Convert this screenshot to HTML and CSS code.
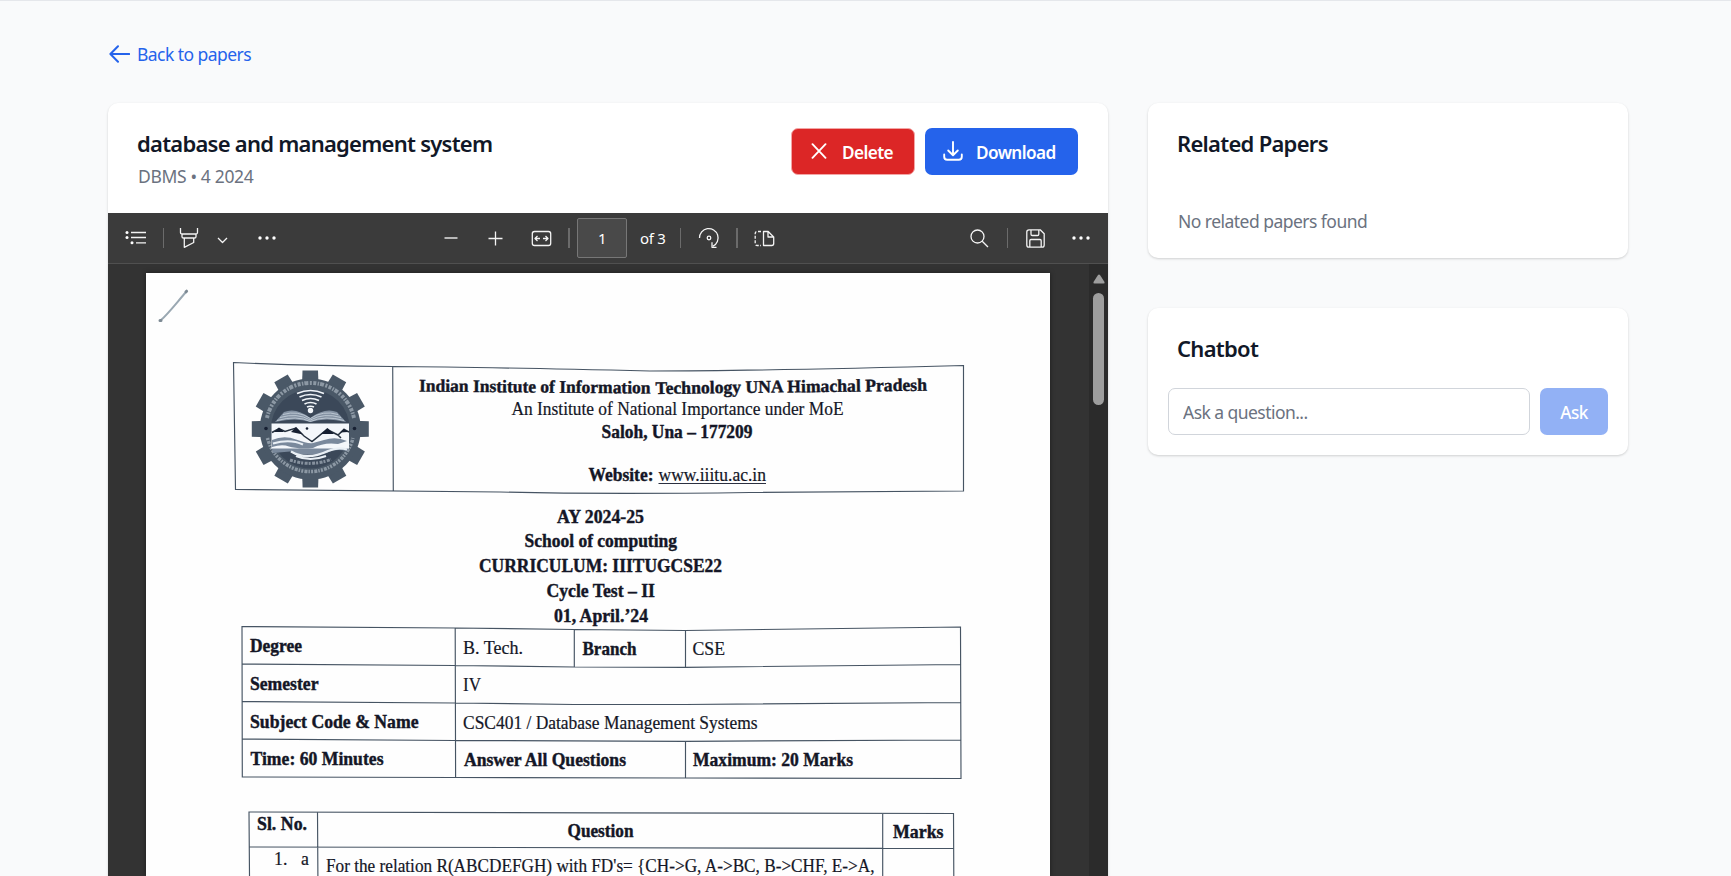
FILE: index.html
```html
<!DOCTYPE html>
<html lang="en">
<head>
<meta charset="utf-8">
<title>database and management system</title>
<link rel="stylesheet" href="styles.css">
</head>
<body>
<main class="page">
  <a class="back" href="#">
    <svg class="back-icon" width="21" height="18" viewBox="0 0 21 18"><path d="M9 1.200 1.400 9 9 16.800M1.500 9H20.200"/></svg>
    <span>Back to papers</span>
  </a>
  <div class="columns">
    <section class="card viewer">
      <header class="viewer-head">
        <div class="heading">
          <h1 class="title wide">database and management system</h1>
          <p class="muted meta">DBMS • 4 2024</p>
        </div>
        <div class="actions">
          <button class="btn danger"><svg width="16" height="16" viewBox="0 0 16 16"><path d="M1.500 1.200 14.500 14.800M14.500 1.200 1.500 14.800"/></svg><span>Delete</span></button>
          <button class="btn primary"><svg width="20" height="20" viewBox="0 0 20 20"><path d="M10 1V14M5.200 9.500 10 14.200 14.800 9.500M1.200 13.500v2.200a3 3 0 0 0 3 3h11.600a3 3 0 0 0 3-3V13.500"/></svg><span>Download</span></button>
        </div>
      </header>
      <div class="toolbar">
        <div class="tools start">
          <svg width="22" height="16" viewBox="0 0 22 16"><path d="M6 2.500H21M6 7.500H21M11 12.800H21"/><g class="fill"><circle cx="2" cy="2.500" r="1.500"/><circle cx="2" cy="7.500" r="1.500"/><circle cx="7" cy="12.800" r="1.500"/></g></svg>
          <i class="sep"></i>
          <svg class="marker" width="20" height="22" viewBox="0 0 20 22"><path d="M1.500 1V5.500Q1.500 7 3 7H17Q18.500 7 18.500 5.500V1M3 7.200V9.700Q3 11 4.500 11H15.500Q17 11 17 9.700V7.200M5.300 11V20.300L14.700 15.500V11"/></svg>
          <svg class="chev" width="11" height="7" viewBox="0 0 11 7"><path d="M1 1 5.500 5.500 10 1"/></svg>
          <svg class="dots" width="18" height="4" viewBox="0 0 18 4"><g class="fill"><circle cx="2" cy="2" r="1.700"/><circle cx="9" cy="2" r="1.700"/><circle cx="16" cy="2" r="1.700"/></g></svg>
        </div>
        <div class="tools middle">
          <svg class="dim" width="14" height="14" viewBox="0 0 14 14"><path d="M.5 7H13.500"/></svg>
          <svg class="plus" width="15" height="15" viewBox="0 0 15 15"><path d="M.5 7.500H14.500M7.500 .5V14.500"/></svg>
          <svg class="fit" width="21" height="17" viewBox="0 0 21 17"><path d="M3.500 1.500H17.500Q19.700 1.500 19.700 3.700V13.300Q19.700 15.500 17.500 15.500H3.500Q1.300 15.500 1.300 13.300V3.700Q1.300 1.500 3.500 1.500ZM9 8.500H4M6.500 6 4 8.500 6.500 11M12 8.500h5M14.500 6 17 8.500 14.500 11"/></svg>
          <i class="sep thick"></i>
          <span class="page-no">1</span>
          <span class="count">of 3</span>
          <i class="sep s2"></i>
          <svg class="rotate" width="22" height="22" viewBox="0 0 22 22"><path d="M1.500 11A9.300 9.300 0 1 1 15 19.200M14 15.200V20.300H18.500"/><circle cx="11" cy="11" r="1.800"/></svg>
          <i class="sep thick s3"></i>
          <svg class="view" width="21" height="17" viewBox="0 0 21 17"><path d="M9.500 1.500H14.200L19.700 7V13.500Q19.700 15.500 17.700 15.500H9.500ZM14 1.500V7H19.700"/><path d="M7 1.500H3.200Q1.200 1.500 1.200 3.500V13.500Q1.200 15.500 3.200 15.500H7" stroke-dasharray="3 1.500"/></svg>
        </div>
        <div class="tools end">
          <svg width="19" height="19" viewBox="0 0 19 19"><circle cx="7.500" cy="7.500" r="6.500"/><path d="M12.200 12.200 18 18"/></svg>
          <i class="sep s4"></i>
          <svg class="save" width="19" height="19" viewBox="0 0 19 19"><path d="M3 .8H14.200L18.200 4.800V16Q18.200 18.200 16 18.200H3Q.8 18.200 .8 16V3Q.8 .8 3 .8ZM5 .8V5.200Q5 6.500 6.300 6.500H11.500Q12.800 6.500 12.800 5.200V.8M3.800 18.200V11.700Q3.800 10.500 5 10.500H14Q15.200 10.500 15.200 11.700V18.200"/></svg>
          <svg class="dots2" width="18" height="4" viewBox="0 0 18 4"><g class="fill"><circle cx="2" cy="2" r="1.700"/><circle cx="9" cy="2" r="1.700"/><circle cx="16" cy="2" r="1.700"/></g></svg>
        </div>
      </div>
      <div class="document">
        <!-- Scanned sheet: rules bow slightly, so the page is drawn as one SVG -->
        <svg class="sheet" width="904" height="603" viewBox="146 273 904 603">
          <path class="pencil" d="M161 320C168 314 178 301 186.500 291.500"/>
          <path class="pencil-tip" d="M186 291.800l.6-.6M160 320.500h1"/>
          <g class="rule">
            <path d="M233.500 362.500Q310 366 393 366.500T650 371Q760 371 963.500 365.500V491L750 492.500Q600 494.500 500 492L235.500 489.500ZM392.700 366.500 393.300 491.300"/>
            <path d="M242 626.500 455 628 574 629.500 685 630.500 960.500 627 961 778.500 685 778 455 777.500 242.300 777ZM242 664 455 665.500 574 667 685 667.300 960.500 664.500M242 701.500 455 703 574 704.500H685L960.500 702.500M242 739 455 740.500 685 741.300 960.500 740M455.200 628 455.600 777.500M574.300 629.500V667M685.500 630.500V667.300M685.500 741.300V778"/>
            <path d="M249.500 876 249 812 600 812.800 953.500 813.500 953.800 876M249 847 883 848.300 953.500 848.500M317.500 812.300 317.900 876M882.700 813.500V876"/>
          </g>
          <g class="emblem">
            <g class="gear">
              <path id="tooth" d="M302 385 302.500 370.500H318L318.500 385Z"/>
              <use href="#tooth" transform="rotate(30 310.300 429)"/><use href="#tooth" transform="rotate(60 310.300 429)"/><use href="#tooth" transform="rotate(90 310.300 429)"/><use href="#tooth" transform="rotate(120 310.300 429)"/><use href="#tooth" transform="rotate(150 310.300 429)"/><use href="#tooth" transform="rotate(180 310.300 429)"/><use href="#tooth" transform="rotate(210 310.300 429)"/><use href="#tooth" transform="rotate(240 310.300 429)"/><use href="#tooth" transform="rotate(270 310.300 429)"/><use href="#tooth" transform="rotate(300 310.300 429)"/><use href="#tooth" transform="rotate(330 310.300 429)"/>
              <circle cx="310.300" cy="429" r="50.500"/>
            </g>
            <circle class="core" cx="310.300" cy="429" r="39.500"/>
            <path class="lettering" stroke-dasharray="3 1.300 1.500 1 4 1.500 2 1.500" d="M267 418A44.500 44.500 0 0 1 354 418"/>
            <path class="lettering low" stroke-dasharray="2 1.200 3 1 1.500 1.200" d="M267.500 438A44 44 0 0 0 353 438"/>
            <path class="waves" d="M297 393.500Q310.500 387.500 324 393.500M299.500 397Q310.500 392 321.500 397M302 400.500Q310.500 396.500 319 400.500M304.500 404Q310.500 401 316.500 404M307 407Q310.500 405.500 314 407"/>
            <circle class="snow" cx="310.500" cy="410.500" r="2.700"/>
            <path class="book" d="M310.300 418Q296 407 284 412L275 422Q296 417 310.300 422Q326 417 346 422L337 412Q325 407 310.300 418Z"/>
            <path class="book-lines" d="M280 417.500Q297 412.500 310.300 420Q324 412.500 341 417.500M283 414.500Q298 410 310.300 418.500Q323 410 338 414.500M277 420.500Q297 415 310.300 421.500Q325 415 344 420.500"/>
            <path class="snow" d="M271.500 423.500H349V449H271.500Z"/>
            <path class="ridge" d="M272 432.500 279 428.500 285 431.500 296 428 304 436 312 441.500 327 429.500 334 433 338 435 344 429.500 349 432M338 435 341 438"/>
            <path class="peaks" d="M274 432 279 427.500 284 432ZM291 432 296 427 303 434.500ZM321 434 327.500 428 334 434ZM340 432.500 344 428.500 348 432Z"/>
            <path class="slope" d="M272 440Q284 435 296 439.500T313 443L324 440Q336 436 347 441L338 444Q324 442 313 448Q296 449 289 446.500T272 447ZM272 448.500H349L347 451Q334 448.500 327 453Q303 457 290 451.500L273 453Z"/>
            <path class="river" d="M273 443.500Q290 438.500 303 444.500M291 451.500Q307 461 328 451Q338 446.500 347 449.500M296 456Q310 462 326 456"/>
            <path class="lettering tiny" stroke-dasharray="3 1 2 1.500" d="M290 460Q310 467 331 459.500"/>
            <circle class="dot" cx="307" cy="428.500" r="1.300"/><circle class="dot" cx="266" cy="428.500" r="1.800"/><circle class="dot" cx="354.500" cy="428.500" r="1.800"/>
          </g>
          <g class="ink bold">
            <text x="419" y="391.500" textLength="231.500" lengthAdjust="spacingAndGlyphs" transform="rotate(.5 419 391.500)">Indian Institute of Information</text>
            <text x="655.500" y="394" textLength="271.500" lengthAdjust="spacingAndGlyphs" transform="rotate(-.7 655.500 394)">Technology UNA Himachal Pradesh</text>
            <text x="601.500" y="437.500" textLength="151" lengthAdjust="spacingAndGlyphs">Saloh, Una – 177209</text>
            <text x="588.500" y="481" textLength="65" lengthAdjust="spacingAndGlyphs">Website:</text>
            <text x="557" y="522.700" textLength="87" lengthAdjust="spacingAndGlyphs">AY 2024-25</text>
            <text x="524.500" y="547.300" textLength="152.500" lengthAdjust="spacingAndGlyphs">School of computing</text>
            <text x="479" y="571.500" textLength="243" lengthAdjust="spacingAndGlyphs">CURRICULUM: IIITUGCSE22</text>
            <text x="546.500" y="597" textLength="108.500" lengthAdjust="spacingAndGlyphs">Cycle Test – II</text>
            <text x="554" y="621.500" textLength="94" lengthAdjust="spacingAndGlyphs">01, April.’24</text>
            <text x="250" y="652" textLength="52" lengthAdjust="spacingAndGlyphs">Degree</text>
            <text x="582.500" y="655" textLength="54" lengthAdjust="spacingAndGlyphs">Branch</text>
            <text x="250" y="690" textLength="68.500" lengthAdjust="spacingAndGlyphs">Semester</text>
            <text x="250" y="727.500" textLength="168.500" lengthAdjust="spacingAndGlyphs">Subject Code &amp; Name</text>
            <text x="250.500" y="765" textLength="133" lengthAdjust="spacingAndGlyphs">Time: 60 Minutes</text>
            <text x="464" y="766" textLength="162" lengthAdjust="spacingAndGlyphs">Answer All Questions</text>
            <text x="693" y="766" textLength="160" lengthAdjust="spacingAndGlyphs">Maximum: 20 Marks</text>
            <text x="257" y="829.500" textLength="50" lengthAdjust="spacingAndGlyphs">Sl. No.</text>
            <text x="567.500" y="837" textLength="66" lengthAdjust="spacingAndGlyphs">Question</text>
            <text x="893" y="838" textLength="50.500" lengthAdjust="spacingAndGlyphs">Marks</text>
          </g>
          <g class="ink">
            <text x="511.500" y="415" textLength="332" lengthAdjust="spacingAndGlyphs">An Institute of National Importance under MoE</text>
            <text x="658.500" y="481" textLength="107.500" lengthAdjust="spacingAndGlyphs">www.iiitu.ac.in</text>
            <text x="463" y="653.500" textLength="60" lengthAdjust="spacingAndGlyphs">B. Tech.</text>
            <text x="692.500" y="654.500" textLength="32.500" lengthAdjust="spacingAndGlyphs">CSE</text>
            <text x="463" y="690.500" textLength="18" lengthAdjust="spacingAndGlyphs">IV</text>
            <text x="463" y="729" textLength="294.500" lengthAdjust="spacingAndGlyphs">CSC401 / Database Management Systems</text>
            <text x="274" y="864.500">1.</text>
            <text x="301" y="864.500">a</text>
            <text x="326" y="871.500" textLength="548.500" lengthAdjust="spacingAndGlyphs">For the relation R(ABCDEFGH) with FD's= {CH-&gt;G, A-&gt;BC, B-&gt;CHF, E-&gt;A,</text>
          </g>
          <path class="underline" d="M658.500 483.500H766"/>
        </svg>
        <div class="scroll">
          <svg width="12" height="10" viewBox="0 0 12 10"><path class="arrow" d="M5 1.100Q6 0 7 1.100L11.500 8Q12 9.500 10.500 9.500H1.500Q0 9.500 .5 8Z"/></svg>
          <div class="thumb"></div>
        </div>
      </div>
    </section>
    <aside class="side">
      <section class="card related">
        <h2 class="title">Related Papers</h2>
        <p class="muted empty">No related papers found</p>
      </section>
      <section class="card chatbot">
        <h2 class="title">Chatbot</h2>
        <form class="ask-row">
          <input class="question" type="text" placeholder="Ask a question...">
          <button class="ask" type="button">Ask</button>
        </form>
      </section>
    </aside>
  </div>
</main>
</body>
</html>
```
FILE: styles.css
```css
* { box-sizing: border-box; }
body {
  margin: 0;
  height: 876px;
  overflow: hidden;
  background: #f9fafb;
  border-top: 1px solid #e5e7eb;
  font-family: "Noto Sans", "Open Sans", sans-serif;
  font-size: 17.5px;
  letter-spacing: -0.55px;
}
h1, h2, p { margin: 0; }
svg { display: block; flex: none; fill: none; }
.page { padding: 40px 103px 0 108px; }
.back {
  display: flex; align-items: center; gap: 7px;
  height: 25px; margin-bottom: 37px; padding-left: 1px;
  color: #2563eb; text-decoration: none;
}
.back-icon { stroke: #2563eb; stroke-width: 2; stroke-linecap: round; stroke-linejoin: round; }
.back span { padding-top: 1px; }
.columns { display: grid; grid-template-columns: 1000px 480px; gap: 40px; align-items: start; }
.card { background: #fff; border-radius: 10px; box-shadow: 0 1px 3px rgba(0,0,0,.1), 0 1px 2px rgba(0,0,0,.08); }
.viewer { height: 800px; overflow: hidden; }
.viewer-head { display: flex; justify-content: space-between; height: 110px; padding: 25px 30px 25px 29px; }
.title { font-size: 22px; line-height: 30px; font-weight: 600; color: #111827; letter-spacing: -0.72px; }
.wide { letter-spacing: -0.75px; }
.muted { color: #6b7280; line-height: 25px; }
.meta { margin-top: 6px; padding-left: 1px; letter-spacing: -0.35px; }
.actions { display: flex; gap: 10px; }
.btn {
  display: flex; align-items: center; height: 47px; gap: 15px;
  border: 0; border-radius: 7px; color: #fff; white-space: nowrap;
  font: 600 17.2px "Noto Sans", sans-serif; letter-spacing: -0.6px;
}
.btn svg { margin-top: -1px; stroke: #fff; stroke-width: 1.9; stroke-linecap: round; stroke-linejoin: round; }
.btn span { padding-top: 1px; }
.danger { width: 124px; background: #dc2626; border: 1px solid #f3a5a5; padding: 0 19px; }
.primary { width: 153px; background: #2563eb; padding: 0 18px; gap: 13px; }
.toolbar {
  display: grid; grid-template-columns: 336px 506px 1fr;
  height: 51px; background: #3b3b3b; border-bottom: 1px solid #505050;
}
.tools { display: flex; align-items: center; }
.tools svg { stroke: #f4f4f4; stroke-width: 1.3; stroke-linejoin: round; }
.tools .fill { fill: #fff; stroke: none; }
.sep { width: 1px; height: 20px; background: #6b6b6b; flex: none; }
.thick { width: 2px; }
.start { padding-left: 17px; }
.start .sep { margin-left: 16px; }
.marker { margin-left: 15px; }
.chev { margin: 4px 0 0 18px; }
.dots { margin: -1px 0 0 30px; }
.tools .dim { stroke: #b8b8b8; stroke-width: 2; }
.plus { margin-left: 30px; }
.fit { margin-left: 28px; }
.middle .thick { margin-left: 16px; }
.page-no {
  width: 50px; height: 40px; margin-left: 7px; border: 1px solid #777; border-radius: 2px;
  background: #494949; color: #fff; font-size: 15px; line-height: 38px; text-align: center;
}
.count { width: 27px; margin-left: 13px; color: #fff; font-size: 15px; letter-spacing: -0.3px; white-space: nowrap; }
.s2 { margin-left: 13px; }
.rotate { margin-left: 17px; }
.middle .s3 { margin-left: 16px; }
.view { margin-left: 16px; }
.end { padding-left: 20px; }
.s4 { margin-left: 18px; }
.save { margin-left: 18px; }
.dots2 { margin: -1px 0 0 27px; }
.document { display: flex; padding-left: 38px; height: 640px; background: #333; }
.sheet { margin-top: 9px; background: #fefefe; box-shadow: 0 0 5px rgba(0,0,0,.45); }
.scroll { width: 19px; margin-left: auto; padding: 10px 4px 0; background: #2b2b2b; }
.arrow { fill: #9e9e9e; }
.thumb { width: 11px; height: 112px; margin-top: 9px; border-radius: 6px; background: #9e9e9e; }
.rule { stroke: #465463; stroke-width: 1.15; }
.ink { fill: #141626; font: 17.8px "Liberation Serif", "Times New Roman", serif; letter-spacing: 0; stroke: #141626; stroke-width: .2; }
.bold { font-weight: 700; stroke-width: .4; }
.underline { stroke: #2b3040; stroke-width: 1.2; }
.pencil { stroke: #9aa8b2; stroke-width: 2; }
.pencil-tip { stroke: #7d8a94; stroke-width: 3; stroke-linecap: round; }
.emblem { filter: blur(.4px); }
.gear { fill: #4a5867; }
.core { fill: #3b4859; }
.lettering { stroke: #b9c3cd; stroke-width: 4; opacity: .6; }
.low { stroke-width: 3.500; }
.tiny { stroke-width: 3; }
.waves { stroke: #f2f6fa; stroke-width: 1.7; }
.snow { fill: #f4f7fb; }
.book { fill: #8492a3; }
.book-lines { stroke: #c9d3dd; stroke-width: .8; }
.ridge { stroke: #26313f; stroke-width: 1.5; }
.slope { fill: #7a899c; }
.peaks, .dot { fill: #172032; }
.river { stroke: #e9eff5; stroke-width: 2.2; }
.side { display: flex; flex-direction: column; gap: 50px; }
.related { height: 155px; padding: 25px 30px 25px 29px; }
.empty { margin-top: 51px; padding-left: 1px; letter-spacing: -0.53px; }
.chatbot { height: 147px; padding: 25px 20px 20px; }
.chatbot .title { padding-left: 9px; }
.ask-row { display: flex; gap: 10px; margin-top: 25px; }
.question {
  width: 362px; height: 47px; padding: 1px 14px; border: 1px solid #d1d5db; border-radius: 7px;
  background: #fff; font: 17.5px "Noto Sans", sans-serif; letter-spacing: -0.55px;
}
.question::placeholder { color: #6b7280; opacity: 1; }
.ask {
  width: 68px; height: 47px; padding: 1px 0 0; border: 0; border-radius: 7px;
  background: #92b1f5; color: #fff; font: 500 17.2px "Noto Sans", sans-serif; letter-spacing: -0.6px;
}
```
